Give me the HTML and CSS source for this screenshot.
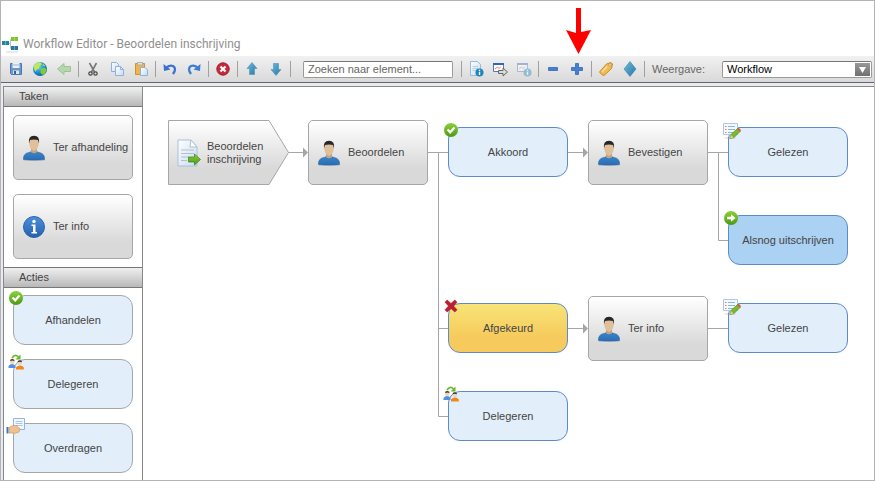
FILE: index.html
```html
<!DOCTYPE html>
<html lang="nl">
<head>
    <meta charset="UTF-8">
    <meta name="viewport" content="width=device-width, initial-scale=1.0">
    <title>Workflow Editor - Beoordelen inschrijving</title>
    <link rel="stylesheet" href="styles.css">
</head>
<body>

    <!-- Shared icons -->
    <svg class="icon-library" aria-hidden="true">
        <defs>
            <linearGradient id="green" x1="0" y1="0" x2="0" y2="1">
                <stop offset="0" stop-color="#8fd03c"/>
                <stop offset="1" stop-color="#4a9a12"/>
            </linearGradient>
            <linearGradient id="blue" x1="0" y1="0" x2="0" y2="1">
                <stop offset="0" stop-color="#4a90dc"/>
                <stop offset="1" stop-color="#2560ac"/>
            </linearGradient>
            <linearGradient id="shirt" x1="0" y1="0" x2="0" y2="1">
                <stop offset="0" stop-color="#3a86cc"/>
                <stop offset="1" stop-color="#2a6cb4"/>
            </linearGradient>
            <linearGradient id="teal" x1="0" y1="0" x2="1" y2="1">
                <stop offset="0" stop-color="#6cbcd8"/>
                <stop offset="1" stop-color="#2a76a8"/>
            </linearGradient>
            <linearGradient id="paper" x1="0" y1="0" x2="1" y2="1">
                <stop offset="0" stop-color="#ffffff"/>
                <stop offset="1" stop-color="#c6dcf2"/>
            </linearGradient>
            <linearGradient id="metal" x1="0" y1="0" x2="0" y2="1">
                <stop offset="0" stop-color="#ffffff"/>
                <stop offset="0.75" stop-color="#d9d9d9"/>
                <stop offset="1" stop-color="#d9d9d9"/>
            </linearGradient>
            <radialGradient id="globe" cx="0.35" cy="0.3" r="0.8">
                <stop offset="0" stop-color="#8fe0ff"/>
                <stop offset="0.5" stop-color="#2396dc"/>
                <stop offset="1" stop-color="#0c4a94"/>
            </radialGradient>
        </defs>
        <symbol id="icon-user" viewBox="0 0 22 26">
            <ellipse cx="11" cy="25" rx="11" ry="1" fill="#000" opacity="0.15"/>
            <path d="M0.500 24.500Q0 18.500 6 17.500L8.500 16.500H13.500L16 17.500Q22 18.500 21.500 24.500Q11 25.500 0.500 24.500Z" fill="url(#shirt)" stroke="#2a66a5" stroke-width="0.600"/>
            <path d="M8 13H14V17Q11 19.500 8 17Z" fill="#c8a27c"/>
            <path d="M6.500 5Q11 2 15.500 5L15.800 9Q15.300 14 11 16Q6.700 14 6.200 9Z" fill="#dfbf9c"/>
            <path d="M6 8.500Q4.800 1 11 0.700Q17.200 1 16 8.500L15 5Q11 4 7 5Z" fill="#2b2523"/>
        </symbol>
        <symbol id="icon-info" viewBox="0 0 22 22">
            <circle cx="11" cy="11" r="10.500" fill="url(#blue)" stroke="#2b65ae"/>
            <circle cx="11" cy="5.500" r="1.700" fill="#fff"/>
            <path d="M8.500 8.500H12.500V16H14V17.500H8.500V16H10V10H8.500Z" fill="#fff"/>
        </symbol>
        <symbol id="icon-document" viewBox="0 0 24 28">
            <path d="M1 1H14L20 8V27H1Z" fill="url(#paper)" stroke="#a9c0d8"/>
            <path d="M14 1L13 8L20 8Z" fill="#fff" stroke="#a9c0d8"/>
            <path d="M4 11H17M4 14.500H17M4 18H12M4 21.500H10" stroke="#b4bfca" stroke-width="1.200"/>
            <path d="M11.500 18H17.500V15L23.500 20.500L17.500 26V23H11.500Z" fill="url(#green)" stroke="#3b7c18" stroke-width="0.700"/>
        </symbol>
        <symbol id="icon-check" viewBox="0 0 16 16">
            <circle cx="8" cy="8" r="7" fill="url(#green)"/>
            <path d="M4.500 7.500L7.200 10.300L11.500 5.500" fill="none" stroke="#fff" stroke-width="2.200"/>
        </symbol>
        <symbol id="icon-forward" viewBox="0 0 16 16">
            <circle cx="8" cy="8" r="7" fill="url(#green)"/>
            <path d="M4 6.800H8V4.200L12.500 8L8 11.800V9.200H4Z" fill="#fff"/>
        </symbol>
        <symbol id="icon-reject" viewBox="0 0 16 16">
            <path d="M2 4.200L4.200 2L8 5.500L11.800 2L14 4.200L10.500 8L14 11.800L11.800 14L8 10.500L4.200 14L2 11.800L5.500 8Z" fill="#c01c30" stroke="#a01528" stroke-width="0.600"/>
        </symbol>
        <symbol id="icon-delegate" viewBox="0 0 16 16">
            <path d="M4 4Q7 -0.500 10.500 3" fill="none" stroke="#6bb52a" stroke-width="1.700"/>
            <path d="M12.500 0.500V5.500H7.500Z" fill="#6bb52a"/>
            <path d="M0.500 14V12Q2 10 4 10Q6.500 10 7.500 12V14Z" fill="#5590e0"/>
            <circle cx="4.300" cy="7.700" r="2.300" fill="#f0d3b8"/>
            <path d="M2 7Q2 5 4.300 5Q6.600 5 6.600 7Q4.300 6 2 7Z" fill="#33302d"/>
            <path d="M8 15.500V13.500Q9.500 11.500 12 11.500Q14.500 11.500 15.800 13.500V15.500Z" fill="#ef8718"/>
            <circle cx="11.800" cy="9" r="2.300" fill="#f0d3b8"/>
            <path d="M9.500 8.300Q9.500 6.300 11.800 6.300Q14.100 6.300 14.100 8.300Q11.800 7.300 9.500 8.300Z" fill="#33302d"/>
        </symbol>
        <symbol id="icon-transfer" viewBox="0 0 19 16">
            <path d="M7.500 0.500H18.500V11.500H7.500Z" fill="#f4f9ff" stroke="#8fb4e8"/>
            <path d="M9.500 3.500H16.500M9.500 5.500H16.500M9.500 7.500H16.500" stroke="#a9c8f0"/>
            <path d="M0.500 9H2.500V15.500H0.500Z" fill="#3478cc"/>
            <path d="M3 9.500L7 7.500H11L12 9.500L14 10.500L13 14Q9 16 6 15H3Z" fill="#f0c090" stroke="#c89058" stroke-width="0.600"/>
        </symbol>
        <symbol id="icon-read" viewBox="0 0 18 18">
            <ellipse cx="7" cy="16" rx="6" ry="1" fill="#000" opacity="0.1"/>
            <path d="M0.500 1.500H14.500V12.500H0.500Z" fill="#f4f9ff" stroke="#a9c8f0"/>
            <path d="M5 4.500H12M5 7.500H12M5 10.500H10" stroke="#8bb4e6"/>
            <path d="M2 4.500H3.500M2 7.500H3.500M2 10.500H3.500" stroke="#e0824a"/>
            <path d="M7 16.500L8 12.500L14.500 6.500L17.500 9L11 15.500Z" fill="#7cb82f" stroke="#548a1c" stroke-width="0.700"/>
            <path d="M14 7L15.500 5.500L18 8L16.800 9.500Z" fill="#d95a45"/>
            <path d="M7 16.500L8 13L10.500 15.500Z" fill="#f0cf80"/>
        </symbol>
    </svg>

    <header class="title-bar">
        <svg class="app-icon" viewBox="0 0 17 17" aria-hidden="true">
            <path d="M5 7.500H8.500V3.500H11M8.500 7V12.500H11" fill="none" stroke="#b9c4cc"/>
            <path d="M9 1H16V5H9Z" fill="#7cc627"/>
            <path d="M0 5H7V9H0Z" fill="#1d86a8"/>
            <path d="M9 10H16V14H9Z" fill="#2478a0"/>
            <path d="M3.500 5V9M12.500 1V5M12.500 10V14" stroke="#fff" opacity="0.35"/>
            <path d="M4 16H16" stroke="#d5d5d5"/>
        </svg>
        <h1 class="title">Workflow Editor - Beoordelen inschrijving</h1>
        <svg class="pointer" viewBox="0 0 26 47" aria-hidden="true">
            <path d="M10 0H15V24L25 22L12.500 46L0 22L10 25Z" fill="#f00"/>
        </svg>
    </header>

    <div class="toolbar" role="toolbar" aria-label="Werkbalk">
        <button class="tool" aria-label="Opslaan">
            <svg viewBox="0 0 16 16">
                <path d="M2.500 2.500H13.500V13.500H3.500L2.500 12.500Z" fill="#6c96c8" stroke="#4a78b0"/>
                <path d="M4.500 2H11.500V7H4.500Z" fill="#e8f0fa"/>
                <path d="M5 4H11" stroke="#9ab4d4"/>
                <path d="M5 9.500H11V13H5Z" fill="#dce6f2"/>
                <path d="M6 10H8V13H6Z" fill="#3b5f94"/>
            </svg>
        </button>
        <button class="tool" aria-label="Publiceren">
            <svg viewBox="0 0 16 16">
                <circle cx="8" cy="8" r="7" fill="url(#globe)"/>
                <path d="M2 5Q4 1.500 8 1.200L10 3L7.500 5L7 7.500L4.500 8.500L3.500 11Q1.500 8 2 5Z" fill="#c5e84a"/>
                <path d="M8.500 8L12 6.500L14.500 8Q14.500 12 11 14L8.500 12Z" fill="#7ccb3c"/>
                <path d="M11 2.500L13.500 5L12 5.500L10.500 4Z" fill="#a8dc50"/>
            </svg>
        </button>
        <button class="tool" aria-label="Terug" disabled>
            <svg viewBox="0 0 16 16">
                <path d="M1.500 8L8 2.500V5.500H14.500V10.500H8V13.500Z" fill="#b4d8ac" stroke="#9cc494"/>
            </svg>
        </button>
        <span class="separator"></span>
        <button class="tool" aria-label="Knippen">
            <svg viewBox="0 0 16 16">
                <path d="M4.500 2L9.500 11M11.500 2L6.500 11" stroke="#777" stroke-width="1.600"/>
                <circle cx="5.500" cy="12.500" r="1.700" fill="none" stroke="#444" stroke-width="1.200"/>
                <circle cx="10.500" cy="12.500" r="1.700" fill="none" stroke="#444" stroke-width="1.200"/>
            </svg>
        </button>
        <button class="tool" aria-label="Kopiëren">
            <svg viewBox="0 0 16 16">
                <path d="M2.500 1.500H7.500L9.500 3.500V10.500H2.500Z" fill="url(#paper)" stroke="#8eafe0"/>
                <path d="M6.500 5.500H11.500L14.500 8.500V14.500H6.500Z" fill="url(#paper)" stroke="#8eafe0"/>
                <path d="M11.500 5.500V8.500H14.500" fill="none" stroke="#8eafe0"/>
            </svg>
        </button>
        <button class="tool" aria-label="Plakken">
            <svg viewBox="0 0 16 16">
                <path d="M2.500 2.500H11.500V13.500H2.500Z" fill="#f0b44c" stroke="#cf9132"/>
                <path d="M4.500 1.500H9.500V4H4.500Z" fill="#dfe5ec" stroke="#9aa5b0" stroke-width="0.800"/>
                <path d="M7.500 6.500H12L14.500 9V14.500H7.500Z" fill="url(#paper)" stroke="#8eafe0"/>
            </svg>
        </button>
        <span class="separator"></span>
        <button class="tool" aria-label="Ongedaan maken">
            <svg viewBox="0 0 16 16">
                <path d="M4 7.500Q7 3.500 11 5Q15 7.500 11 13" fill="none" stroke="#3c70d0" stroke-width="2.300"/>
                <path d="M1.500 3L2 10L8.500 8.500Z" fill="#3c70d0"/>
            </svg>
        </button>
        <button class="tool" aria-label="Opnieuw">
            <svg viewBox="0 0 16 16">
                <path d="M12 7.500Q9 3.500 5 5Q1 7.500 5 13" fill="none" stroke="#3c7cd4" stroke-width="2.300"/>
                <path d="M14.500 3L14 10L7.500 8.500Z" fill="#3c7cd4"/>
            </svg>
        </button>
        <span class="separator"></span>
        <button class="tool" aria-label="Verwijderen">
            <svg viewBox="0 0 16 16">
                <circle cx="8" cy="8" r="6.200" fill="#c8283a" stroke="#a01c2c"/>
                <path d="M5.500 5.500L10.500 10.500M10.500 5.500L5.500 10.500" stroke="#fff" stroke-width="2.200"/>
            </svg>
        </button>
        <span class="separator"></span>
        <button class="tool" aria-label="Omhoog">
            <svg viewBox="0 0 16 16">
                <path d="M8 1.500L13 7.500H10.500V13.500H5.500V7.500H3Z" fill="url(#teal)" stroke="#4a92b8" stroke-width="0.600"/>
            </svg>
        </button>
        <button class="tool" aria-label="Omlaag">
            <svg viewBox="0 0 16 16">
                <path d="M8 14.500L13 8.500H10.500V2.500H5.500V8.500H3Z" fill="url(#teal)" stroke="#4a92b8" stroke-width="0.600"/>
            </svg>
        </button>
        <span class="separator"></span>
        <input type="text" class="search" value="Zoeken naar element..." aria-label="Zoeken naar element">
        <span class="separator"></span>
        <button class="tool" aria-label="Eigenschappen">
            <svg viewBox="0 0 16 16">
                <path d="M2.500 0.500H9.500L12.500 3.500V14.500H2.500Z" fill="url(#paper)" stroke="#9ab8dc"/>
                <path d="M4.500 5.500H10M4.500 7.500H10M4.500 9.500H8" stroke="#bccde0"/>
                <circle cx="11.500" cy="11.500" r="4" fill="#1c86bc"/>
                <path d="M11.500 8.800V10M11.500 10.800V14" stroke="#fff" stroke-width="1.400"/>
            </svg>
        </button>
        <button class="tool" aria-label="Scherm openen">
            <svg viewBox="0 0 16 16">
                <path d="M1.500 2.500H11.500V10.500H1.500Z" fill="#fff" stroke="#4a7cc4"/>
                <path d="M1 3H12" stroke="#2f66b8" stroke-width="2"/>
                <path d="M3 8L5.500 6L7 7.500L9 5.500" fill="none" stroke="#e08080"/>
                <path d="M6.500 9.500H11V7L15.500 11L11 15V12.500H6.500Z" fill="#d8d8d8" stroke="#666"/>
            </svg>
        </button>
        <button class="tool" aria-label="Scherminformatie" disabled>
            <svg class="faded" viewBox="0 0 16 16">
                <path d="M1.500 2.500H11.500V10.500H1.500Z" fill="#fff" stroke="#4a7cc4"/>
                <path d="M1 3H12" stroke="#2f66b8" stroke-width="2"/>
                <path d="M3 8L5.500 6L7 7.500L9 5.500" fill="none" stroke="#e08080"/>
                <circle cx="11.500" cy="11.500" r="4" fill="#1c86bc"/>
                <path d="M11.500 8.800V10M11.500 10.800V14" stroke="#fff" stroke-width="1.400"/>
            </svg>
        </button>
        <span class="separator"></span>
        <button class="tool" aria-label="Uitzoomen">
            <svg viewBox="0 0 16 16">
                <path d="M3.500 6.500H12.500V9.500H3.500Z" fill="#4480d0" stroke="#3468bc" stroke-width="0.800"/>
            </svg>
        </button>
        <button class="tool" aria-label="Inzoomen">
            <svg viewBox="0 0 16 16">
                <path d="M6.500 2.500H9.500V6.500H13.500V9.500H9.500V13.500H6.500V9.500H2.500V6.500H6.500Z" fill="#4480d0" stroke="#3468bc" stroke-width="0.800"/>
            </svg>
        </button>
        <span class="separator"></span>
        <button class="tool" aria-label="Label">
            <svg viewBox="0 0 16 16">
                <path d="M1.500 11L8.500 3L13 1.500L14.500 3L13.500 7.500L6 14.500Q4 14.500 1.500 11Z" fill="#f4bc50" stroke="#c48a2c"/>
                <path d="M4 11L9 5.500" stroke="#fde0a0" stroke-width="1.500"/>
                <circle cx="12" cy="4" r="1.200" fill="#fff" stroke="#a87824" stroke-width="0.600"/>
            </svg>
        </button>
        <button class="tool" aria-label="Beslissing">
            <svg viewBox="0 0 16 16">
                <path d="M8 0.500L14 8L8 15.500L2 8Z" fill="url(#teal)" stroke="#3a88b0" stroke-width="0.600"/>
            </svg>
        </button>
        <span class="separator"></span>
        <label for="view" class="view-label">Weergave:</label>
        <div class="select-wrap">
            <select id="view" class="view-select">
                <option>Workflow</option>
            </select>
            <svg class="select-arrow" viewBox="0 0 15 13" aria-hidden="true">
                <path d="M4 4H11L7.500 10Z" fill="#fff"/>
            </svg>
        </div>
    </div>

    <div class="workspace">
        <aside class="palette">
            <h2 class="palette-title">Taken</h2>
            <div class="palette-list tasks">
                <button class="task">
                    <svg class="task-icon"><use href="#icon-user"/></svg>
                    <span>Ter afhandeling</span>
                </button>
                <button class="task">
                    <svg class="task-icon"><use href="#icon-info"/></svg>
                    <span>Ter info</span>
                </button>
            </div>
            <h2 class="palette-title">Acties</h2>
            <div class="palette-list actions">
                <button class="action">
                    <svg class="badge"><use href="#icon-check"/></svg>
                    Afhandelen
                </button>
                <button class="action">
                    <svg class="badge"><use href="#icon-delegate"/></svg>
                    Delegeren
                </button>
                <button class="action">
                    <svg class="badge badge-wide"><use href="#icon-transfer"/></svg>
                    Overdragen
                </button>
            </div>
        </aside>

        <main class="canvas">
            <!-- Connections between the nodes -->
            <svg class="connections" aria-hidden="true">
                <g fill="none" stroke="#a6a6a6">
                    <path d="M145 65.500H161"/>
                    <path d="M285 65.500H305M295.500 65.500V329.500H305M295.500 241.500H305"/>
                    <path d="M425 65.500H441M425 241.500H441"/>
                    <path d="M565 65.500H585M575.500 65.500V153.500H585M565 241.500H585"/>
                </g>
                <g fill="#a6a6a6">
                    <path d="M160 60.500L165 65.500L160 70.500Z"/>
                    <path d="M440 60.500L445 65.500L440 70.500Z"/>
                    <path d="M440 236.500L445 241.500L440 246.500Z"/>
                </g>
            </svg>

            <div class="node start col-1 row-1">
                <svg class="start-shape" viewBox="0 0 121 65" aria-hidden="true">
                    <path d="M0.500 0.500H101L120.500 32.500L101 64.500H0.500Z" fill="url(#metal)" stroke="#a6a6a6"/>
                </svg>
                <svg class="start-icon"><use href="#icon-document"/></svg>
                <span>Beoordelen inschrijving</span>
            </div>
            <div class="node task col-2 row-1">
                <svg class="task-icon"><use href="#icon-user"/></svg>
                <span>Beoordelen</span>
            </div>
            <div class="node action col-3 row-1">
                <svg class="badge"><use href="#icon-check"/></svg>
                Akkoord
            </div>
            <div class="node task col-4 row-1">
                <svg class="task-icon"><use href="#icon-user"/></svg>
                <span>Bevestigen</span>
            </div>
            <div class="node action col-5 row-1">
                <svg class="badge badge-read"><use href="#icon-read"/></svg>
                Gelezen
            </div>
            <div class="node action highlighted col-5 row-2">
                <svg class="badge"><use href="#icon-forward"/></svg>
                Alsnog uitschrijven
            </div>
            <div class="node action selected col-3 row-3">
                <svg class="badge"><use href="#icon-reject"/></svg>
                Afgekeurd
            </div>
            <div class="node task col-4 row-3">
                <svg class="task-icon"><use href="#icon-user"/></svg>
                <span>Ter info</span>
            </div>
            <div class="node action col-5 row-3">
                <svg class="badge badge-read"><use href="#icon-read"/></svg>
                Gelezen
            </div>
            <div class="node action col-3 row-4">
                <svg class="badge"><use href="#icon-delegate"/></svg>
                Delegeren
            </div>
        </main>
    </div>

</body>
</html>
```
FILE: styles.css
```css
* {
    box-sizing: border-box;
}

body {
    display: flex;
    flex-direction: column;
    min-height: 100vh;
    margin: 0;
    border: 1px solid #b4b4b4;
    background-color: #fff;
    color: #444;
    font-family: "Liberation Sans", Arial, sans-serif;
    font-size: 11px;
    line-height: 13px;
}

button,
input,
select {
    font: inherit;
    color: inherit;
}

.icon-library {
    position: absolute;
    width: 0;
    height: 0;
}

/* Title bar */
.title-bar {
    position: relative;
    display: flex;
    align-items: flex-end;
    gap: 4px;
    height: 55px;
    padding: 0 1px 3px;
}

.app-icon {
    width: 17px;
    height: 17px;
}

.title {
    margin: 0;
    color: #8f8f8f;
    font-family: Roboto, "Segoe UI", sans-serif;
    font-size: 12px;
    font-weight: normal;
    line-height: 17px;
}

/* Red arrow that points at the zoom button */
.pointer {
    position: absolute;
    top: 7px;
    left: 565px;
    z-index: 5;
    width: 26px;
    height: 47px;
}

/* Toolbar */
.toolbar {
    display: flex;
    align-items: center;
    height: 27px;
    padding: 0 2px 0 3px;
    border-bottom: 1px solid #666;
    background: linear-gradient(#f1f1f1, #d9d9d9);
}

.tool {
    display: flex;
    flex: none;
    align-items: center;
    justify-content: center;
    width: 24px;
    height: 24px;
    padding: 0;
    border: none;
    background: none;
}

.tool svg {
    width: 16px;
    height: 16px;
}

.faded {
    opacity: 0.4;
}

.separator {
    flex: none;
    width: 1px;
    height: 16px;
    margin: 0 2px;
    background-color: #a0a0a0;
}

.search {
    width: 150px;
    height: 17px;
    margin: 0 6px 0 10px;
    padding: 0 4px;
    border: 1px solid #9a9a9a;
    border-top-color: #777;
    border-radius: 2px;
    background-color: #fff;
    color: #666;
}

.view-label {
    margin: 0 17px 0 5px;
    color: #666;
}

.select-wrap {
    position: relative;
    flex: 1;
}

.view-select {
    display: block;
    width: 100%;
    height: 17px;
    padding: 0 20px 0 4px;
    border: 1px solid #9a9a9a;
    border-top-color: #777;
    border-radius: 2px;
    appearance: none;
    background-color: #fff;
    color: #000;
}

.select-arrow {
    position: absolute;
    top: 2px;
    right: 2px;
    width: 15px;
    height: 13px;
    background: linear-gradient(#999, #707070);
    pointer-events: none;
}

/* Workspace */
.workspace {
    display: flex;
    flex: 1;
    padding: 3px 0 0 2px;
    background-color: #e8ebf2;
}

.palette {
    flex: none;
    width: 140px;
    border: 1px solid #888;
    border-bottom: none;
    background-color: #fff;
}

.palette-title {
    height: 20px;
    margin: 0;
    padding: 3px 15px;
    border-bottom: 1px solid #777;
    background: linear-gradient(#f0f0f0, #b8b8b8);
    font-size: 11px;
    font-weight: normal;
    line-height: 13px;
}

.palette-list {
    display: flex;
    flex-direction: column;
    gap: 14px;
    padding: 8px 9px;
}

.tasks {
    border-bottom: 1px solid #777;
}

.actions {
    padding: 7px 9px 6px;
}

.canvas {
    position: relative;
    flex: 1;
    border-top: 1px solid #888;
    background-color: #fff;
}

/* Tasks and actions, in the palette and on the canvas */
.task {
    display: flex;
    align-items: center;
    gap: 8px;
    width: 120px;
    height: 65px;
    padding: 0 0 0 9px;
    border: 1px solid #a6a6a6;
    border-radius: 5px;
    background: linear-gradient(#fff, #d9d9d9 75%);
    text-align: left;
    white-space: nowrap;
}

.task-icon {
    width: 22px;
    height: 26px;
}

.action {
    position: relative;
    display: flex;
    align-items: center;
    justify-content: center;
    width: 120px;
    height: 50px;
    padding: 0;
    border: 1px solid #a6a6a6;
    border-radius: 12px;
    background-color: #e2effa;
}

.badge {
    position: absolute;
    top: -6px;
    left: -6px;
    width: 16px;
    height: 16px;
}

.badge-wide {
    left: -8px;
    width: 19px;
}

.badge-read {
    width: 18px;
    height: 18px;
}

/* Canvas nodes are centred on the line of their row */
.connections {
    position: absolute;
    top: 0;
    left: 0;
    width: 100%;
    height: 100%;
}

.node {
    position: absolute;
    margin-top: -32px;
}

.node.action {
    margin-top: -25px;
    border-color: #5a8ccc;
}

.node.highlighted {
    background-color: #abd1f3;
}

.node.selected {
    background: linear-gradient(#f8e478, #f6ca5c 70%);
}

.start {
    z-index: 0;
    display: flex;
    align-items: center;
    gap: 6px;
    width: 121px;
    height: 65px;
    padding: 0 20px 0 9px;
}

.start-shape {
    position: absolute;
    top: 0;
    left: 0;
    z-index: -1;
    width: 121px;
    height: 65px;
}

.start-icon {
    flex: none;
    width: 24px;
    height: 28px;
}

.col-1 { left: 25px; }
.col-2 { left: 165px; }
.col-3 { left: 305px; }
.col-4 { left: 445px; }
.col-5 { left: 585px; }

.row-1 { top: 65px; }
.row-2 { top: 153px; }
.row-3 { top: 241px; }
.row-4 { top: 329px; }
```
